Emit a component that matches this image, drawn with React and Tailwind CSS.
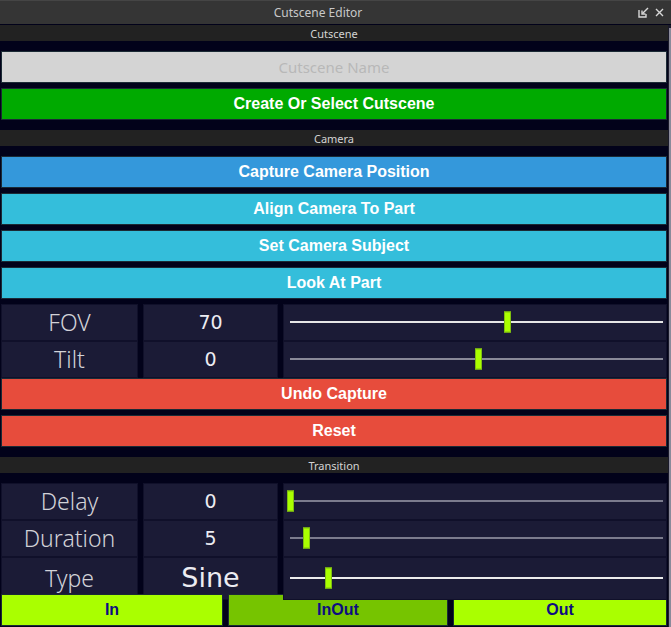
import React from 'react';

const sans = { fontFamily: '"Noto Sans", "Open Sans", sans-serif' };

const cameraButtons = [
  { label: 'Capture Camera Position', color: 'bg-[#3498db]' },
  { label: 'Align Camera To Part', color: 'bg-[#34bedb]' },
  { label: 'Set Camera Subject', color: 'bg-[#34bedb]' },
  { label: 'Look At Part', color: 'bg-[#34bedb]' },
];

const cameraRows = [
  { label: 'FOV', value: '70', thumb: 220, track: 'h-[2px] bg-[#e6e6e6]' },
  { label: 'Tilt', value: '0', thumb: 191, track: 'h-[2px] bg-[#8a8a99]' },
];

const transitionRows = [
  { label: 'Delay', value: '0', thumb: 3, track: 'h-[1px] bg-[#dcdce4]', big: false },
  { label: 'Duration', value: '5', thumb: 19, track: 'h-[1px] bg-[#dcdce4]', big: false },
  { label: 'Type', value: 'Sine', thumb: 41, track: 'h-[2px] bg-[#ececec]', big: true },
];

const SectionHeader = ({ title }) => (
  <div
    className="h-[16px] bg-[#222222] flex items-center justify-center text-[11px] leading-none text-[#d4d4d4]"
    style={sans}
  >
    {title}
  </div>
);

const Button = ({ label, color, text = 'text-white' }) => (
  <div
    className={`h-[32px] border border-[#1b2a35] flex items-center justify-center font-bold text-[16px] ${color} ${text}`}
    style={{ fontFamily: '"Liberation Sans", Arial, sans-serif' }}
  >
    {label}
  </div>
);

const SliderRow = ({ label, value, thumb, track, big }) => (
  <div className="h-[32px] grid grid-cols-[137px_135px_1fr] gap-[5px]">
    <div
      className="bg-[#1b1b36] border border-[#10102a] flex items-center justify-center text-[23px] font-light text-[#d2d2d8]"
      style={sans}
    >
      {label}
    </div>
    <div
      className={`bg-[#1b1b36] border border-[#10102a] flex items-center justify-center text-[#ececf2] ${big ? 'text-[27px]' : 'text-[19px]'}`}
      style={{ fontFamily: '"DejaVu Sans", sans-serif' }}
    >
      {value}
    </div>
    <div className="relative bg-[#1b1b36] border border-[#10102a] flex items-center">
      <div className={`absolute left-[6px] right-[3px] top-1/2 -translate-y-1/2 ${track}`} />
      <div
        className="absolute top-1/2 -translate-y-1/2 w-[7px] h-[21px] bg-[#aaff00] border border-[#7fbf10]"
        style={{ left: thumb }}
      />
    </div>
  </div>
);

const UndockIcon = () => (
  <svg width="11" height="11" viewBox="0 0 11 11" fill="none" stroke="#d8d8d8" strokeWidth="1.4">
    <path d="M1 3 V10 H8 V7" />
    <path d="M10 1 L4.5 6.5" />
    <path d="M4 3.5 V7 H7.5" />
  </svg>
);

const CloseIcon = () => (
  <svg width="9" height="9" viewBox="0 0 9 9" stroke="#d8d8d8" strokeWidth="1.4">
    <path d="M1 1 L8 8 M8 1 L1 8" />
  </svg>
);

export default function App() {
  return (
    <div className="w-[671px] h-[627px] bg-[#02021a] overflow-hidden flex flex-col">
      {/* Title bar */}
      <div className="h-[24px] bg-[#353535] border-t border-[#454545] flex items-center shrink-0">
        <div className="flex-1 text-center text-[12px] text-[#c8c8c8]" style={sans}>
          Cutscene Editor
        </div>
        <div className="w-[35px] flex items-center gap-[6px] pl-[2px]">
          <UndockIcon />
          <CloseIcon />
        </div>
      </div>

      <div className="flex flex-1 mt-[1px]">
        <div className="flex-1 flex flex-col">
          <SectionHeader title="Cutscene" />
          <div className="py-[10px] px-[1px] flex flex-col gap-[5px]">
            <div
              className="h-[32px] bg-[#d4d4d4] border border-[#1b2a35] flex items-center justify-center text-[15px] text-[#b8b8b8]"
              style={sans}
            >
              Cutscene Name
            </div>
            <Button label="Create Or Select Cutscene" color="bg-[#00aa00]" />
          </div>

          <SectionHeader title="Camera" />
          <div className="py-[10px] px-[1px] flex flex-col gap-[5px]">
            {cameraButtons.map((b) => (
              <Button key={b.label} label={b.label} color={b.color} />
            ))}
            {cameraRows.map((r) => (
              <SliderRow key={r.label} {...r} />
            ))}
            <Button label="Undo Capture" color="bg-[#e74c3c]" />
            <Button label="Reset" color="bg-[#e74c3c]" />
          </div>

          <SectionHeader title="Transition" />
          <div className="pt-[10px] px-[1px] flex flex-col gap-[5px]">
            {transitionRows.map((r) => (
              <SliderRow key={r.label} {...r} />
            ))}
            <div className="grid grid-cols-[222px_220px_1fr] gap-[5px]">
              <Button label="In" color="bg-[#aaff00]" text="text-[#0d0d80]" />
              <Button label="InOut" color="bg-[#76c400]" text="text-[#0d0d80]" />
              <Button label="Out" color="bg-[#aaff00]" text="text-[#0d0d80]" />
            </div>
          </div>
        </div>
        {/* Scrollbar */}
        <div className="w-[3px] bg-[#1a1a2a] flex">
          <div className="w-[2px] ml-[1px] mt-[3px] bg-[#8a8a9a]" />
        </div>
      </div>
    </div>
  );
}
